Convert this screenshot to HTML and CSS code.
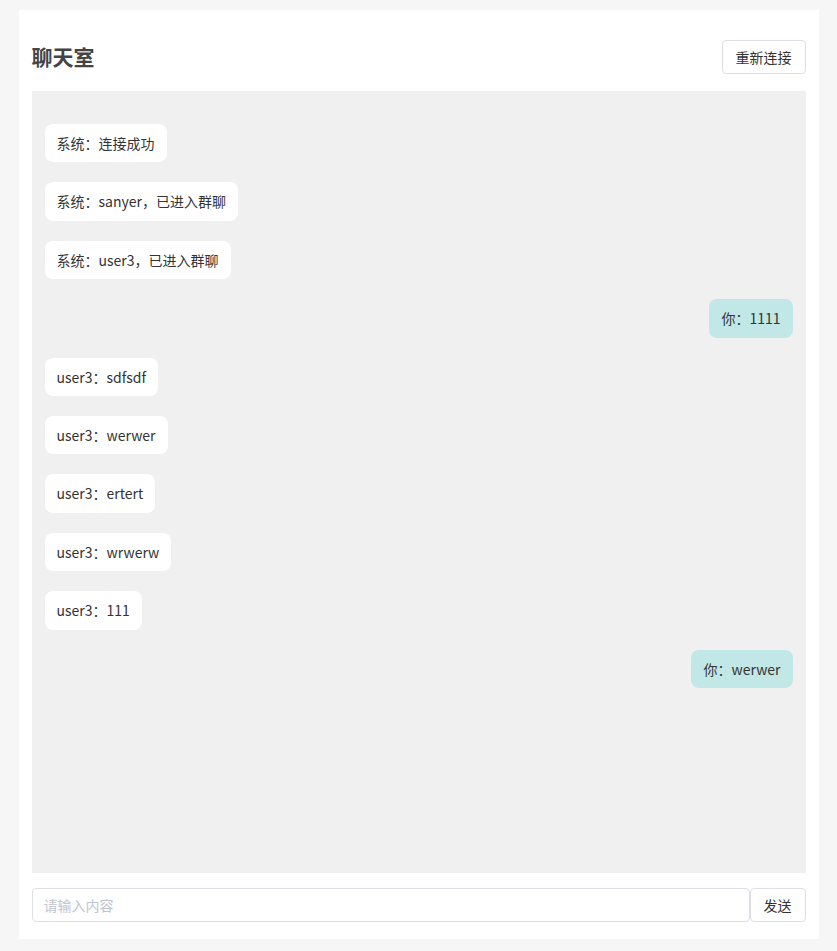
FILE: index.html
```html
<!DOCTYPE html>
<html lang="zh-CN">
<head>
<meta charset="utf-8">
<title>聊天室</title>
<link rel="stylesheet" href="styles.css">
</head>
<body>
<div class="card">
  <div class="header">
    <h1 class="title">聊天室</h1>
    <button class="btn">重新连接</button>
  </div>
  <div class="chat">
    <div class="msg">系统：连接成功</div>
    <div class="msg">系统：sanyer，已进入群聊</div>
    <div class="msg">系统：user3，已进入群聊</div>
    <div class="msg me">你：1111</div>
    <div class="msg">user3：sdfsdf</div>
    <div class="msg">user3：werwer</div>
    <div class="msg">user3：ertert</div>
    <div class="msg">user3：wrwerw</div>
    <div class="msg">user3：111</div>
    <div class="msg me">你：werwer</div>
  </div>
  <div class="composer">
    <input class="input" type="text" placeholder="请输入内容">
    <button class="btn send">发送</button>
  </div>
</div>
</body>
</html>
```
FILE: styles.css
```css
* { box-sizing: border-box; }
html, body { margin: 0; padding: 0; }
body {
  background: #f6f6f6;
  font-family: "Noto Sans CJK SC", "Noto Sans", sans-serif;
  color: #333;
  padding-top: 10px;
}
.card {
  width: 800px;
  margin: 0 auto;
  background: #fff;
  padding: 30px 13px 17px;
  display: flex;
  flex-direction: column;
}
.header {
  display: flex;
  align-items: center;
  justify-content: space-between;
  height: 34px;
  margin-bottom: 17px;
}
.title {
  margin: 0;
  font-size: 21px;
  font-weight: 700;
  color: #444;
  line-height: 28px;
  padding-bottom: 3px;
}
.btn {
  font-family: inherit;
  font-size: 14px;
  color: #333;
  background: #fff;
  border: 1px solid #dcdfe6;
  border-radius: 4px;
  height: 34px;
  padding: 0 13px;
  line-height: 32px;
}
.chat {
  flex-shrink: 0;
  height: 782px;
  background: #f0f0f0;
  padding: 33px 13px 12px;
  display: flex;
  flex-direction: column;
  align-items: flex-start;
  gap: 20px;
}
.msg {
  background: #fff;
  border-radius: 8px;
  padding: 8px 12px;
  font-size: 14px;
  line-height: 22.4px;
  white-space: nowrap;
}
.msg.me {
  align-self: flex-end;
  background: #c1e7e6;
}
.composer {
  display: flex;
  margin-top: 15px;
  height: 34px;
}
.input {
  flex: 1;
  height: 34px;
  border: 1px solid #dcdfe6;
  border-radius: 4px;
  padding: 0 11px;
  font-family: inherit;
  font-size: 14px;
  color: #333;
  outline: none;
}
.input::placeholder { color: #c0c4cc; }
.send {
  width: 56px;
  padding: 0;
}
```
